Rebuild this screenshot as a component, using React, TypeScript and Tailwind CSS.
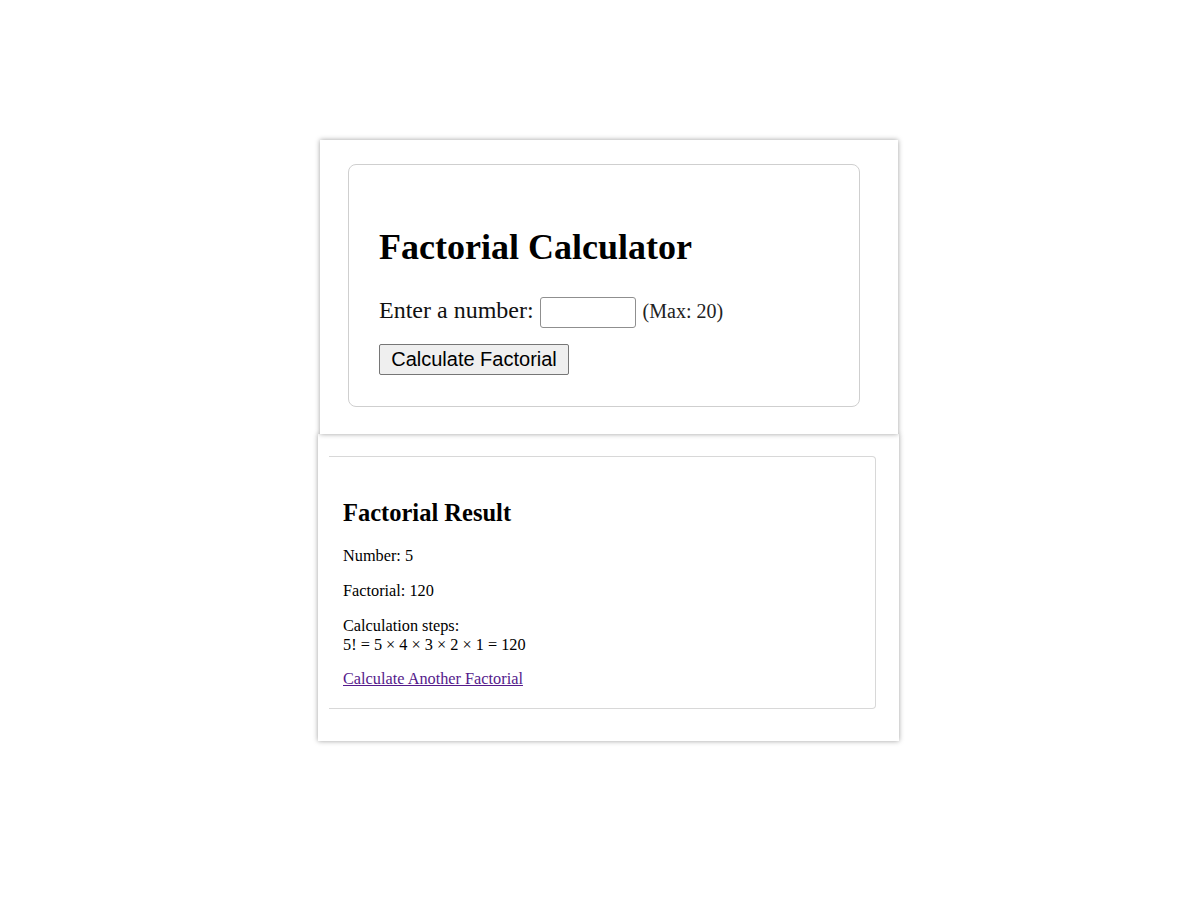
export default function App() {
  const serif = { fontFamily: '"Liberation Serif", "Times New Roman", serif' };
  return (
    <div className="min-h-[900px] w-[1200px] bg-white pt-[140px]" style={serif}>
      <div className="relative z-10 ml-[320px] w-[578px] bg-white pt-[24px] pl-[28px] pb-[27px] shadow-[0_0_5px_rgba(0,0,0,0.38)]">
        <div className="w-[512px] rounded-[8px] border border-[#cfcfcf] px-[30px] pt-[62px] pb-[31px]">
          <h1 className="m-0 text-[36px] font-bold leading-[41.4px] text-black">Factorial Calculator</h1>
          <div className="mt-[29px] flex items-start">
            <span className="text-[24px] leading-[27.6px] text-[#111]">Enter a number:</span>
            <input
              type="text"
              className="ml-[6px] h-[31px] w-[96px] rounded-[3px] border border-[#8f8f8f] bg-white px-[2px]"
            />
            <span className="ml-[7px] mt-[3px] text-[20px] leading-[23px] text-[#222]">(Max: 20)</span>
          </div>
          <button
            className="mt-[16px] h-[31px] w-[190px] rounded-[2px] border border-[#767676] bg-[#efefef] text-[20px] leading-[23px] text-black"
            style={{ fontFamily: '"Liberation Sans", Arial, sans-serif' }}
          >
            Calculate Factorial
          </button>
        </div>
      </div>
      <div className="ml-[318px] w-[581px] bg-white pt-[22px] pl-[11px] pb-[32px] shadow-[0_0_5px_rgba(0,0,0,0.38)]">
        <div className="w-[547px] rounded-r-[4px] border-y border-r border-[#d8d8d8] pl-[14px] pt-[21px] pb-[20px] text-black">
          <h2 className="m-0 mt-[21px] text-[24.5px] font-bold leading-[28.2px]">Factorial Result</h2>
          <p className="mt-[19px] text-[16.3px] leading-[18.75px]">Number: 5</p>
          <p className="mt-[17px] text-[16.3px] leading-[18.75px]">Factorial: 120</p>
          <p className="mt-[16px] text-[16.3px] leading-[18.75px]">
            Calculation steps:
            <br />
            5! = 5 × 4 × 3 × 2 × 1 = 120
          </p>
          <p className="mt-[15px] text-[16.3px] leading-[18.75px]">
            <a href="#" className="text-[#551a8b] underline">Calculate Another Factorial</a>
          </p>
        </div>
      </div>
    </div>
  );
}
